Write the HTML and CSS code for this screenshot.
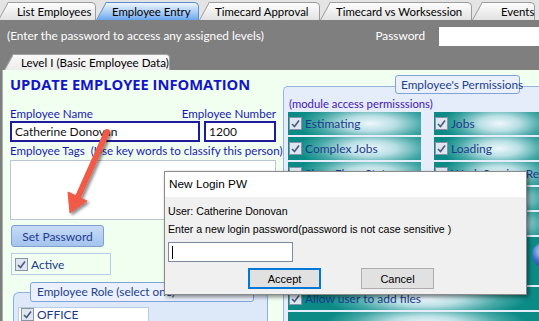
FILE: index.html
```html
<!DOCTYPE html>
<html lang="en">
<head>
    <meta charset="UTF-8">
    <title>Employee Entry</title>
    <link rel="stylesheet" href="styles.css">
</head>
<body>
    <div class="tabs">
        <div class="tab tab-list">List Employees</div>
        <div class="tab tab-entry active">Employee Entry</div>
        <div class="tab tab-approval">Timecard Approval</div>
        <div class="tab tab-worksession">Timecard vs Worksession</div>
        <div class="tab tab-events">Events</div>
    </div>

    <div class="pwbar">
        <div class="pwrow">
            <span class="hint">(Enter the password to access any assigned levels)</span>
            <span class="pwlabel">Password</span>
            <input class="pwinput" type="password">
        </div>
        <div class="subtabs">
            <div class="subtab">Level I (Basic Employee Data)</div>
        </div>
    </div>

    <div class="panel">
        <!-- left column: basic data -->
        <div class="left">
            <div class="title">UPDATE EMPLOYEE INFOMATION</div>
            <div class="label-row">
                <span>Employee Name</span>
                <span>Employee Number</span>
            </div>
            <div class="input-row">
                <div class="field field-name">Catherine Donovan</div>
                <div class="field field-number">1200</div>
            </div>
            <div class="label-tags">Employee Tags&nbsp; (Use key words to classify this person)</div>
            <div class="tags-box"></div>
            <button class="set-pw">Set Password</button>
            <div class="active-box">
                <span class="cb"><svg width="13" height="13" viewBox="0 0 13 13"><rect x="0.5" y="0.5" width="12" height="12" fill="#dfe6ef" stroke="#8794a8"/><path d="M3 7 L5.5 9.5 L10 3.5" fill="none" stroke="#4a5b82" stroke-width="1.6"/></svg></span>
                Active
            </div>
            <div class="role-group">
                <div class="legend role-legend">Employee Role (select one)</div>
                <div class="role-item">
                    <span class="cb"><svg width="13" height="13" viewBox="0 0 13 13"><rect x="0.5" y="0.5" width="12" height="12" fill="#dfe6ef" stroke="#8794a8"/><path d="M3 7 L5.5 9.5 L10 3.5" fill="none" stroke="#4a5b82" stroke-width="1.6"/></svg></span>
                    OFFICE
                </div>
            </div>
        </div>

        <!-- right column: permissions -->
        <div class="right">
            <div class="perm-group">
                <div class="legend perm-legend">Employee's Permissions</div>
                <div class="module-note">(module access permisssions)</div>
                <div class="perm-grid">
                    <div class="perm"><span class="cb"><svg width="13" height="13" viewBox="0 0 13 13"><rect x="0.5" y="0.5" width="12" height="12" fill="#dfe6ef" stroke="#8794a8"/><path d="M3 7 L5.5 9.5 L10 3.5" fill="none" stroke="#4a5b82" stroke-width="1.6"/></svg></span>Estimating</div>
                    <div class="perm"><span class="cb"><svg width="13" height="13" viewBox="0 0 13 13"><rect x="0.5" y="0.5" width="12" height="12" fill="#dfe6ef" stroke="#8794a8"/><path d="M3 7 L5.5 9.5 L10 3.5" fill="none" stroke="#4a5b82" stroke-width="1.6"/></svg></span>Jobs</div>
                    <div class="perm"><span class="cb"><svg width="13" height="13" viewBox="0 0 13 13"><rect x="0.5" y="0.5" width="12" height="12" fill="#dfe6ef" stroke="#8794a8"/><path d="M3 7 L5.5 9.5 L10 3.5" fill="none" stroke="#4a5b82" stroke-width="1.6"/></svg></span>Complex Jobs</div>
                    <div class="perm"><span class="cb"><svg width="13" height="13" viewBox="0 0 13 13"><rect x="0.5" y="0.5" width="12" height="12" fill="#dfe6ef" stroke="#8794a8"/><path d="M3 7 L5.5 9.5 L10 3.5" fill="none" stroke="#4a5b82" stroke-width="1.6"/></svg></span>Loading</div>
                    <div class="perm"><span class="cb"><svg width="13" height="13" viewBox="0 0 13 13"><rect x="0.5" y="0.5" width="12" height="12" fill="#dfe6ef" stroke="#8794a8"/></svg></span>Shop Floor Status</div>
                    <div class="perm"><span class="cb"><svg width="13" height="13" viewBox="0 0 13 13"><rect x="0.5" y="0.5" width="12" height="12" fill="#dfe6ef" stroke="#8794a8"/></svg></span>Work Session Review</div>
                    <div class="perm"></div>
                    <div class="perm"></div>
                    <div class="perm"></div>
                    <div class="perm"></div>
                    <div class="perm perm-wide perm-tall"><span class="orb"></span></div>
                    <div class="perm perm-wide"><span class="cb"><svg width="13" height="13" viewBox="0 0 13 13"><rect x="0.5" y="0.5" width="12" height="12" fill="#dfe6ef" stroke="#8794a8"/><path d="M3 7 L5.5 9.5 L10 3.5" fill="none" stroke="#4a5b82" stroke-width="1.6"/></svg></span>Allow user to add files</div>
                    <div class="perm perm-wide"></div>
                </div>
            </div>
        </div>
    </div>

    <!-- annotation arrow -->
    <svg class="arrow" width="539" height="321" viewBox="0 0 539 321">
        <defs>
            <filter id="shade" x="-20%" y="-20%" width="140%" height="140%">
                <feDropShadow dx="2" dy="2" stdDeviation="1.5" flood-color="#000" flood-opacity="0.45"/>
            </filter>
        </defs>
        <g filter="url(#shade)" fill="#f05a47" stroke="#f05a47">
            <line x1="107" y1="132" x2="78" y2="197" stroke-width="6" stroke-linecap="round"/>
            <polygon points="70,213 87,201 68,192" stroke-width="1" stroke-linejoin="round"/>
        </g>
    </svg>

    <!-- modal prompt -->
    <div class="dialog">
        <div class="dlg-title">New Login PW</div>
        <div class="dlg-body">
            <div class="dlg-line">User: Catherine Donovan</div>
            <div class="dlg-line dlg-prompt">Enter a new login password(password is not case sensitive )</div>
            <div class="dlg-input"><span class="caret"></span></div>
            <div class="dlg-buttons">
                <button class="dlg-btn accept">Accept</button>
                <button class="dlg-btn cancel">Cancel</button>
            </div>
        </div>
    </div>
</body>
</html>
```

FILE: styles.css
```css
body {
    margin: 0;
    width: 539px;
    height: 321px;
    overflow: hidden;
    position: relative;
    background-color: #7f7f7f;
    font-family: Lato, "Open Sans", Arial, sans-serif;
    font-size: 11.3px;
    color: #000;
}

/* top tab strip */
.tabs {
    position: relative;
    z-index: 0;
    display: flex;
    height: 20px;
    background-color: #e4e4e4;
    overflow: hidden;
}

.tab {
    position: relative;
    box-sizing: border-box;
    flex: none;
    height: 18px;
    margin-top: 2px;
    margin-left: 10px;
    padding-left: 6px;
    line-height: 17px;
    font-size: 11.4px;
    white-space: nowrap;
    border-top: 1px solid #9c9c9c;
    border-right: 1px solid #9c9c9c;
    border-top-right-radius: 5px;
    background: linear-gradient(#fdfdfd, #e2e2e2);
}

.tab::before {
    content: '';
    position: absolute;
    z-index: -1;
    left: -10px;
    top: -1px;
    bottom: 0;
    width: 14px;
    background: linear-gradient(#fdfdfd, #e2e2e2);
    border-left: 1px solid #9c9c9c;
    border-top: 1px solid #9c9c9c;
    transform: skewX(-29deg);
    transform-origin: bottom left;
}

.tab.active {
    background: linear-gradient(#eef5fd, #a9cdf6 55%, #6aa6ee);
    border-color: #5b8fcc;
}

.tab.active::before {
    background: linear-gradient(#eef5fd, #a9cdf6 55%, #6aa6ee);
    border-color: #5b8fcc;
}

.tab-list { margin-left: 8px; width: 88px; padding-left: 9px; }
.tab-entry { width: 93px; }
.tab-approval { width: 111px; }
.tab-worksession { width: 142px; }
.tab-events { width: 53px; padding-left: 19px; }

/* password bar */
.pwbar {
    height: 50px;
    box-sizing: border-box;
    padding-top: 7px;
}

.pwrow {
    display: flex;
    align-items: center;
    height: 19px;
    color: #fff;
    font-size: 11.8px;
}

.hint {
    margin-left: 7px;
    margin-top: -3px;
}

.pwlabel {
    margin-left: auto;
    margin-right: 14px;
    margin-top: -3px;
}

.pwinput {
    width: 100px;
    height: 19px;
    box-sizing: border-box;
    border: none;
    margin: 0;
    padding: 0;
    background-color: #fff;
}

.subtabs {
    position: relative;
    z-index: 0;
    display: flex;
    margin-top: 8px;
    height: 16px;
}

.subtab {
    position: relative;
    box-sizing: border-box;
    margin-left: 13px;
    width: 157px;
    height: 16px;
    padding-left: 8px;
    line-height: 15px;
    font-size: 11.6px;
    white-space: nowrap;
    border-top: 1px solid #a4a4a4;
    border-right: 1px solid #a4a4a4;
    border-top-right-radius: 4px;
    background: linear-gradient(#fafafa, #ececec);
}

.subtab::before {
    content: '';
    position: absolute;
    z-index: -1;
    left: -9px;
    top: -1px;
    bottom: 0;
    width: 12px;
    background: linear-gradient(#fafafa, #ececec);
    border-left: 1px solid #a4a4a4;
    border-top: 1px solid #a4a4a4;
    transform: skewX(-29deg);
    transform-origin: bottom left;
}

/* main panel */
.panel {
    display: flex;
    height: 251px;
    margin-left: 2px;
    border-left: 1px solid #a9b4a9;
    background-color: #f0fff0;
    overflow: hidden;
}

.left {
    flex: none;
    width: 277px;
    box-sizing: border-box;
    padding: 5px 0 0 7px;
    color: #1a1ab4;
}

.title {
    font-family: "Open Sans", Arial, sans-serif;
    font-weight: bold;
    font-size: 14.7px;
    line-height: 18px;
    color: #1414c8;
}

.label-row {
    display: flex;
    justify-content: space-between;
    width: 266px;
    margin-top: 14px;
    line-height: 14px;
    font-size: 11.6px;
}

.input-row {
    display: flex;
    gap: 4px;
}

.field {
    box-sizing: border-box;
    height: 21px;
    border: 2px solid #1c1c9c;
    background-color: #fff;
    color: #111;
    padding: 0 3px;
    line-height: 17px;
    font-size: 12px;
}

.field-name { width: 190px; }
.field-number { width: 72px; }

.label-tags {
    margin-top: 2px;
    line-height: 14px;
    font-size: 11.6px;
    white-space: nowrap;
}

.tags-box {
    width: 266px;
    height: 60px;
    margin-top: 2px;
    box-sizing: border-box;
    border: 1px solid #b9c6d4;
    background-color: #fff;
}

.set-pw {
    display: block;
    width: 93px;
    height: 22px;
    margin: 5px 0 0 1px;
    border: 1px solid #7e9fd0;
    border-radius: 3px;
    background: linear-gradient(#c7dbf6, #a4c3ee);
    font-family: Lato, "Open Sans", Arial, sans-serif;
    font-size: 12px;
    color: #1f3a90;
    padding: 0;
}

.active-box {
    display: flex;
    align-items: center;
    gap: 3px;
    width: 100px;
    height: 22px;
    box-sizing: border-box;
    margin: 6px 0 0 1px;
    padding-left: 3px;
    border: 1px solid #b8cce6;
    color: #1c3a8c;
    font-size: 12px;
}

.cb {
    display: inline-flex;
    flex: none;
}

.role-group {
    margin: 17px 0 0 3px;
    width: 255px;
    height: 29px;
    box-sizing: border-box;
    border: 1px solid #8eaede;
    border-bottom: none;
    border-radius: 6px 6px 0 0;
    background-color: #dde8f8;
}

.legend {
    box-sizing: border-box;
    height: 20px;
    line-height: 18px;
    border: 1px solid #7fa2d8;
    border-radius: 3px;
    background-color: #eaf1fc;
    color: #23408e;
    font-size: 11.8px;
    white-space: nowrap;
}

.role-legend {
    width: 224px;
    margin: -11px 0 0 16px;
    padding-left: 6px;
}

.role-item {
    display: flex;
    align-items: center;
    gap: 3px;
    width: 131px;
    height: 14px;
    box-sizing: border-box;
    margin: 5px 0 0 4px;
    padding-left: 2px;
    border: 1px solid #b8cce6;
    border-bottom: none;
    background-color: #fff;
    color: #1c3a8c;
    line-height: 13px;
    font-size: 12px;
}

/* permissions */
.right {
    flex: none;
    width: 256px;
    margin-left: 3px;
    padding-top: 16px;
}

.perm-group {
    height: 235px;
    box-sizing: border-box;
    border: 1px solid #98b4de;
    border-right: none;
    border-bottom: none;
    border-radius: 5px 0 0 0;
    background-color: #e4edf9;
    padding: 0 0 0 4px;
}

.perm-legend {
    width: 125px;
    margin: -12px 0 0 107px;
    padding-left: 5px;
    height: 19px;
}

.module-note {
    margin: 3px 0 0 1px;
    line-height: 14px;
    color: #4416b8;
}

.perm-grid {
    display: grid;
    grid-template-columns: 133px 1fr;
    grid-auto-rows: 23px;
    column-gap: 13px;
    row-gap: 2px;
    margin-top: 1px;
    height: 209px;
    overflow: hidden;
}

.perm {
    display: flex;
    align-items: center;
    gap: 3px;
    padding-left: 1px;
    color: #1d3b8a;
    font-size: 12px;
    white-space: nowrap;
    overflow: hidden;
    background: radial-gradient(ellipse 55% 95% at 62% 50%, #eef7fc 0%, #b8dfe4 35%, #45a8a6 72%, #0c8b86 100%);
}

.perm-wide {
    grid-column: span 2;
    background: radial-gradient(ellipse 40% 95% at 55% 50%, #eef7fc 0%, #b8dfe4 35%, #45a8a6 72%, #0c8b86 100%);
}

.perm-tall {
    grid-row: span 2;
}

.orb {
    flex: none;
    width: 26px;
    height: 26px;
    margin-left: 243px;
    margin-top: -12px;
    border-radius: 50%;
    background: radial-gradient(circle at 40% 35%, #d0e4ff 0%, #3d73c8 45%, #0c2f7c 100%);
}

/* arrow overlay */
.arrow {
    position: absolute;
    left: 0;
    top: 0;
    pointer-events: none;
}

/* dialog */
.dialog {
    position: absolute;
    left: 164px;
    top: 171px;
    width: 363px;
    height: 124px;
    box-sizing: border-box;
    border: 1px solid #8a8a8a;
    background-color: #f0f0f0;
    box-shadow: 2px 2px 4px rgba(0, 0, 0, 0.45);
    font-family: "Liberation Sans", Arial, sans-serif;
    font-size: 10.6px;
}

.dlg-title {
    height: 25px;
    line-height: 25px;
    padding-left: 4px;
    background-color: #fff;
    font-size: 11.8px;
}

.dlg-body {
    padding: 7px 0 0 3px;
}

.dlg-line {
    line-height: 14px;
    white-space: nowrap;
}

.dlg-prompt {
    margin-top: 4px;
}

.dlg-input {
    display: flex;
    align-items: center;
    width: 125px;
    height: 20px;
    box-sizing: border-box;
    margin-top: 6px;
    padding-left: 3px;
    border: 1px solid #7a8aa0;
    background-color: #fff;
}

.caret {
    width: 1px;
    height: 13px;
    background-color: #000;
}

.dlg-buttons {
    display: flex;
    gap: 40px;
    margin: 6px 0 0 80px;
}

.dlg-btn {
    width: 73px;
    height: 21px;
    box-sizing: border-box;
    padding: 0;
    background-color: #e1e1e1;
    border: 1px solid #adadad;
    font-family: "Liberation Sans", Arial, sans-serif;
    font-size: 11px;
    color: #000;
}

.dlg-btn.accept {
    border: 2px solid #0078d7;
}
```
